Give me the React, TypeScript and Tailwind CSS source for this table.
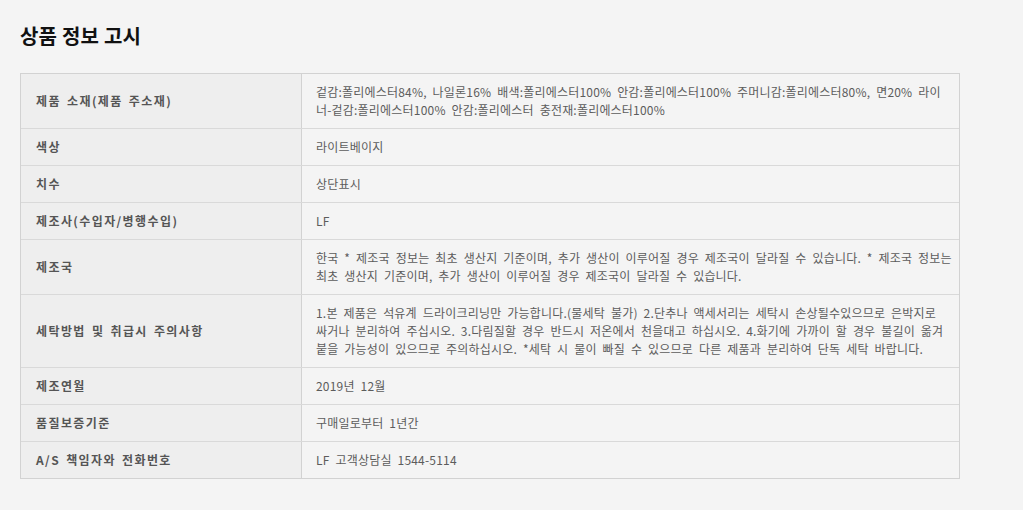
import React from 'react'

type Row = { label: string; lines: string[] }

const rows: Row[] = [
  {
    label: '제품 소재(제품 주소재)',
    lines: [
      '겉감:폴리에스터84%, 나일론16% 배색:폴리에스터100% 안감:폴리에스터100% 주머니감:폴리에스터80%, 면20% 라이',
      '너-겉감:폴리에스터100% 안감:폴리에스터 충전재:폴리에스터100%',
    ],
  },
  { label: '색상', lines: ['라이트베이지'] },
  { label: '치수', lines: ['상단표시'] },
  { label: '제조사(수입자/병행수입)', lines: ['LF'] },
  {
    label: '제조국',
    lines: [
      '한국 * 제조국 정보는 최초 생산지 기준이며, 추가 생산이 이루어질 경우 제조국이 달라질 수 있습니다. * 제조국 정보는',
      '최초 생산지 기준이며, 추가 생산이 이루어질 경우 제조국이 달라질 수 있습니다.',
    ],
  },
  {
    label: '세탁방법 및 취급시 주의사항',
    lines: [
      '1.본 제품은 석유계 드라이크리닝만 가능합니다.(물세탁 불가) 2.단추나 액세서리는 세탁시 손상될수있으므로 은박지로',
      '싸거나 분리하여 주십시오. 3.다림질할 경우 반드시 저온에서 천을대고 하십시오. 4.화기에 가까이 할 경우 불길이 옮겨',
      '붙을 가능성이 있으므로 주의하십시오. *세탁 시 물이 빠질 수 있으므로 다른 제품과 분리하여 단독 세탁 바랍니다.',
    ],
  },
  { label: '제조연월', lines: ['2019년 12월'] },
  { label: '품질보증기준', lines: ['구매일로부터 1년간'] },
  { label: 'A/S 책임자와 전화번호', lines: ['LF 고객상담실 1544-5114'] },
]

export default function App() {
  return (
    <div className="min-h-[510px] w-full bg-[#f4f4f4] px-5 pt-[23px] font-['Noto_Sans_CJK_KR',sans-serif]">
      <h2 className="text-[20px] font-bold leading-[26px] text-[#111] tracking-[0.2px]">상품 정보 고시</h2>

      {/* notice table */}
      <div className="mt-[24px] w-[940px] border border-[#d2d2d2]">
        {rows.map((row, i) => (
          <div
            key={row.label}
            className={`flex ${i > 0 ? 'border-t border-[#d9d9d9]' : ''}`}
          >
            <div className="flex w-[281px] shrink-0 items-center border-r border-[#d2d2d2] bg-[#eeeeee] pl-[15px] text-[12px] font-bold text-[#555] tracking-[1.4px] [word-spacing:2px]">
              {row.label}
            </div>
            <div className="flex-1 bg-[#f4f4f4] py-[9px] pl-[14px] text-[12px] leading-[18px] text-[#5c5c5c] whitespace-nowrap tracking-[0.2px] [word-spacing:3px]">
              {row.lines.map((l, j) => (
                <div key={j}>{l}</div>
              ))}
            </div>
          </div>
        ))}
      </div>
    </div>
  )
}
